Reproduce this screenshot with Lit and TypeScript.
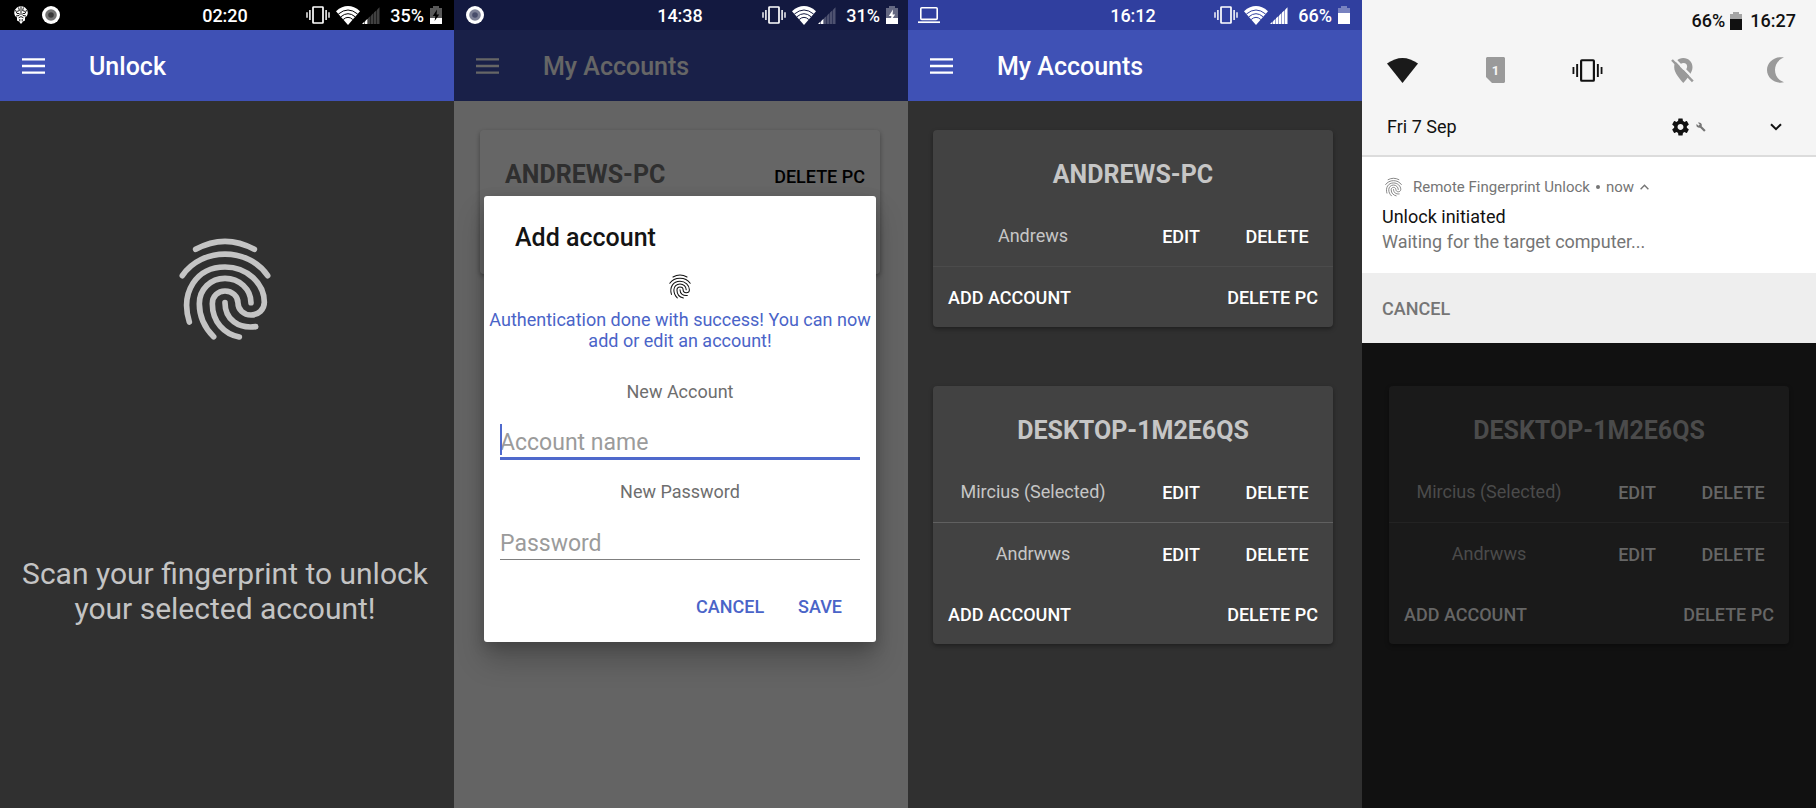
import { LitElement, html, svg, css, nothing } from "lit";
import { customElement, property } from "lit/decorators.js";

const reset = css`
  *,
  *::before,
  *::after {
    box-sizing: border-box;
  }
  h1,
  h2,
  p,
  ul {
    margin: 0;
    padding: 0;
  }
  ul {
    list-style: none;
  }
  svg {
    display: block;
    flex: none;
  }
  button {
    margin: 0;
    padding: 0;
    border: 0;
    background: none;
    color: inherit;
    font: inherit;
    cursor: pointer;
  }
`;

const fingerprint = (width: number, height: number, stroke: number) => html`
  <svg width=${width} height=${height} viewBox="57 53 276 306" fill="none" stroke="currentColor"
    stroke-width=${stroke} stroke-linecap="round" aria-hidden="true">
    <path d="M107 87Q195 39 283 87" />
    <path d="M67 166C125 80 265 80 323 166" />
    <path d="M88 305C60 215 110 140 195 140C262 140 313 190 313 246C313 268 295 284 273 284C251 284 234 268 234 248C234 228 217 212 195 212C174 212 157 228 157 250C157 305 193 341 238 350" />
    <path d="M161 349C132 320 118 290 118 250C118 207 152 174 195 174C238 174 273 207 273 247" />
    <path d="M195 247C195 297 235 326 287 319" />
  </svg>
`;

const vibrate = (width: number, height: number) => html`
  <svg width=${width} height=${height} viewBox="0 0 24 18" fill="none" stroke="currentColor" aria-hidden="true">
    <rect x="7" y="1" width="10" height="16" rx="0.6" stroke-width="1.7" />
    <path d="M3.9 4V14M20.1 4V14" stroke-width="1.5" />
    <path d="M1 6.2V11.8M23 6.2V11.8" stroke-width="1.4" />
  </svg>
`;

const battery = (level: number, charging = false) => html`
  <svg width="12" height="18" viewBox="0 0 12 18" fill="currentColor" aria-hidden="true">
    <path d="M3 0H9V2H12V18H0V2H3Z" opacity="0.35" />
    <rect x="0" y=${18 - level} width="12" height=${level} />
    ${charging
      ? svg`<path class="bolt" d="M7 3.5L2.8 10H5.4L4.6 15L9.2 8.4H6.6Z" />`
      : nothing}
  </svg>
`;

const wifi = html`
  <svg width="24" height="19" viewBox="0 0 24 19" aria-hidden="true">
    <path d="M12 19L0 5.2Q12 -5 24 5.2Z" fill="currentColor" />
    <path class="gap" d="M2.4 8Q12 0 21.6 8M4.8 10.8Q12 4.6 19.2 10.8M7.2 13.5Q12 9.2 16.8 13.5" />
  </svg>
`;

const signal = (bars: number) => html`
  <svg width="18" height="17" viewBox="0 0 18 17" fill="currentColor" aria-hidden="true">
    ${[0, 1, 2, 3, 4, 5].map(
      (i) => svg`<path opacity=${i < bars ? 1 : 0.25}
        d="M${i * 3} 17V${17 - i * 2.85}L${i * 3 + 2.5} ${14.6 - i * 2.85}V17Z" />`
    )}
  </svg>
`;

const lens = html`
  <svg width="26" height="18" viewBox="0 0 26 18" aria-hidden="true">
    <circle cx="13" cy="9" r="9" fill="currentColor" />
    <circle class="ring" cx="13" cy="9" r="5.8" />
    <circle class="core" cx="13" cy="9" r="2.8" />
  </svg>
`;

const brain = html`
  <svg width="26" height="18" viewBox="0 0 26 18" aria-hidden="true">
    <path fill="currentColor" d="M9 1.4Q13 -.8 17 1.4Q20.4 4 19.6 8Q19.4 10.6 17 11.6V14.4L15 15.6L13 18L11 15.6L9 14.4V11.6Q6.6 10.6 6.4 8Q5.6 4 9 1.4Z" />
    <path fill="none" stroke="#000" stroke-width="0.9" d="M13 .5V7M10.6 1.5L11.4 4.6L9 5.4M15.4 1.5L14.6 4.6L17 5.4M7.5 4L9 7.5H11.4M18.5 4L17 7.5H14.6M8 10L11 9.5L13 7.5L15 9.5L18 10M10.6 11.8L13 10.6L15.4 11.8M11.8 13V15.4M14.2 13V15.4" />
  </svg>
`;

const laptop = html`
  <svg width="26" height="18" viewBox="0 0 26 18" fill="none" stroke="currentColor" aria-hidden="true">
    <rect x="4.8" y="1.8" width="16.4" height="11.6" rx="1" stroke-width="1.6" />
    <path d="M2 16.2H24" stroke-width="1.7" />
  </svg>
`;

@customElement("status-bar")
export class StatusBar extends LitElement {
  @property() time = "";
  @property() charge = "";
  @property({ type: Number }) level = 6;
  @property({ type: Number }) bars = 2;
  @property({ type: Boolean }) charging = false;
  @property() notices = "";

  static styles = [
    reset,
    css`
      :host {
        display: grid;
        grid-template-columns: 1fr auto 1fr;
        align-items: center;
        height: 30px;
        padding: 0 calc(8px + var(--trim)) 0 8px;
        background: var(--status);
        color: #fff;
        font-size: 18px;
        line-height: 20px;
        font-weight: 500;
      }
      span {
        padding-top: 2px;
      }
      .notices,
      .system {
        display: flex;
        align-items: center;
        gap: 4px;
      }
      .system {
        justify-content: flex-end;
        gap: 6px;
      }
      .radio {
        display: flex;
        align-items: center;
        gap: 2px;
        padding-right: 4px;
      }
      .gap {
        fill: none;
        stroke: var(--status);
        stroke-width: 1;
      }
      .ring {
        fill: var(--status);
        opacity: 0.55;
      }
      .core {
        fill: var(--status);
        opacity: 0.5;
      }
      .bolt {
        fill: var(--bolt);
      }
    `,
  ];

  render() {
    return html`
      <div class="notices">
        ${this.notices.split(" ").map((n) => (n === "brain" ? brain : n === "lens" ? lens : laptop))}
      </div>
      <span>${this.time}</span>
      <div class="system">
        ${vibrate(24, 18)}
        <div class="radio">${wifi} ${signal(this.bars)}</div>
        <span>${this.charge}</span>
        ${battery(this.level, this.charging)}
      </div>
    `;
  }
}

@customElement("app-bar")
export class AppBar extends LitElement {
  @property() heading = "";

  static styles = [
    reset,
    css`
      :host {
        display: flex;
        align-items: center;
        gap: 44px;
        height: 71px;
        padding: 0 22px;
        background: #3f51b5;
        color: #fff;
      }
      h1 {
        padding-top: 3px;
        font-size: 25px;
        line-height: 30px;
        font-weight: 500;
      }
    `,
  ];

  render() {
    return html`
      <button aria-label="Open menu">
        <svg width="23" height="16" viewBox="0 0 23 16" aria-hidden="true">
          <path d="M0 1.3H23M0 8H23M0 14.7H23" stroke="currentColor" stroke-width="2.3" />
        </svg>
      </button>
      <h1>${this.heading}</h1>
    `;
  }
}

@customElement("pc-card")
export class PcCard extends LitElement {
  @property() name = "";
  @property({ type: Array }) accounts: string[] = [];

  static styles = [
    reset,
    css`
      :host {
        display: block;
        border-radius: 4px;
        background: var(--card, #424242);
        box-shadow: 0 2px 4px rgba(0, 0, 0, 0.35);
        color: var(--card-action, #fff);
        font-size: 18px;
        line-height: 22px;
      }
      h2 {
        padding: 30px 16px 16px;
        color: var(--card-text, #c6c6c6);
        font-size: 25px;
        line-height: 29px;
        font-weight: 700;
        text-align: center;
      }
      .account {
        display: grid;
        grid-template-columns: 25fr 12fr 12fr;
        align-items: center;
        height: 61px;
        padding-right: 8px;
        text-align: center;
      }
      .account:first-child {
        height: 62px;
        border-bottom: 1px solid var(--card-line, #606060);
      }
      .faint .account:first-child {
        border-color: var(--card-faint, #4b4b4b);
      }
      .name {
        color: var(--card-text, #c6c6c6);
      }
      .account button,
      .actions button {
        padding-top: 2px;
        font-weight: 500;
      }
      .actions {
        display: flex;
        justify-content: space-between;
        align-items: center;
        height: 60px;
        padding: 0 15px;
      }
    `,
  ];

  render() {
    return html`
      <h2>${this.name}</h2>
      <ul class=${this.accounts.length > 1 ? "list" : "faint"}>
        ${this.accounts.map(
          (a) => html`
            <li class="account">
              <span class="name">${a}</span>
              <button>EDIT</button>
              <button>DELETE</button>
            </li>
          `
        )}
      </ul>
      <div class="actions">
        <button>ADD ACCOUNT</button>
        <button>DELETE PC</button>
      </div>
    `;
  }
}

@customElement("account-dialog")
export class AccountDialog extends LitElement {
  static styles = [
    reset,
    css`
      :host {
        display: block;
        padding: 27px 16px 17px;
        border-radius: 3px;
        background: #fff;
        box-shadow: 0 18px 28px rgba(0, 0, 0, 0.22), 0 4px 14px rgba(0, 0, 0, 0.18);
        color: #6e6e6e;
        font-size: 18px;
        line-height: 21px;
        text-align: center;
      }
      h2 {
        margin: 0 15px 21px;
        color: #141414;
        font-size: 25px;
        line-height: 30px;
        font-weight: 500;
        text-align: left;
      }
      .print {
        display: flex;
        justify-content: center;
        margin-bottom: 10px;
        color: #111;
      }
      .message {
        margin: 0 -14px 30px;
        color: #4a64c8;
      }
      label {
        display: block;
        margin-bottom: 22px;
      }
      .field {
        position: relative;
        margin-bottom: 21px;
      }
      input {
        display: block;
        width: 100%;
        height: 36px;
        margin: 0;
        padding: 3px 0 0;
        border: 0;
        border-bottom: 1px solid #7f7f7f;
        border-radius: 0;
        outline: 0;
        background: none;
        color: #222;
        font: inherit;
        font-size: 23px;
      }
      input::placeholder {
        color: #9b9b9b;
        opacity: 1;
      }
      .active input {
        border-bottom: 3px solid #4f69cc;
      }
      .caret {
        position: absolute;
        top: 0;
        left: 0;
        width: 2px;
        height: 31px;
        background: #4f69cc;
      }
      .actions {
        display: flex;
        justify-content: flex-end;
        gap: 34px;
        margin-top: 28px;
        padding-right: 18px;
        color: #4a64c8;
      }
      .actions button {
        height: 37px;
        font-weight: 500;
      }
    `,
  ];

  render() {
    return html`
      <h2>Add account</h2>
      <div class="print">${fingerprint(22, 25, 13)}</div>
      <p class="message">Authentication done with success! You can now add or edit an account!</p>
      <label for="account">New Account</label>
      <div class="field active">
        <input id="account" type="text" placeholder="Account name" />
        <span class="caret"></span>
      </div>
      <label for="password">New Password</label>
      <div class="field">
        <input id="password" type="password" placeholder="Password" />
      </div>
      <div class="actions">
        <button>CANCEL</button>
        <button>SAVE</button>
      </div>
    `;
  }
}

@customElement("notification-shade")
export class NotificationShade extends LitElement {
  static styles = [
    reset,
    css`
      :host {
        display: block;
        background: #fff;
        color: #111;
        font-size: 18px;
        line-height: 22px;
      }
      .quick {
        padding: 10px 26px 17px 25px;
        border-bottom: 2px solid #dcdcdc;
        background: #f5f5f5;
      }
      .status {
        display: flex;
        justify-content: flex-end;
        align-items: center;
        gap: 5px;
        margin-right: -6px;
        font-weight: 500;
      }
      .time {
        margin-left: 3px;
      }
      .tiles {
        display: flex;
        justify-content: space-between;
        align-items: center;
        height: 26px;
        margin: 25px 6px 33px 0;
      }
      .off {
        color: #9a9a9a;
      }
      .date {
        display: flex;
        align-items: center;
        height: 22px;
      }
      .date p {
        flex: 1;
      }
      .gear {
        display: flex;
        align-items: center;
        gap: 7px;
        margin-right: 64px;
      }
      .wrench {
        color: #777;
      }
      .expand {
        margin-right: 8px;
      }
      .notice {
        padding: 20px 20px 20px;
      }
      .source {
        display: flex;
        align-items: center;
        gap: 6px;
        height: 20px;
        margin-bottom: 9px;
        padding-left: 3px;
        color: #757575;
        font-size: 15px;
        line-height: 20px;
      }
      .app {
        margin-left: 5px;
      }
      .dot {
        width: 4px;
        height: 4px;
        border-radius: 2px;
        background: #757575;
      }
      .text {
        margin-top: 3px;
        color: #757575;
      }
      .actions {
        display: flex;
        align-items: center;
        height: 70px;
        padding: 0 20px;
        background: #eee;
        color: #757575;
      }
      .actions button {
        padding-top: 2px;
        font-weight: 500;
      }
      .digit {
        fill: #f5f5f5;
        font-size: 13px;
        font-weight: 700;
      }
    `,
  ];

  render() {
    return html`
      <div class="quick">
        <div class="status">
          <span>66%</span>
          ${battery(11)}
          <span class="time">16:27</span>
        </div>
        <div class="tiles">
          <button aria-label="Wi-Fi">
            <svg width="31" height="25" viewBox="0 0 31 25" aria-hidden="true">
              <path d="M15.500 25L0 5.600Q15.500 -5.600 31 5.600Z" fill="#1a1a1a" />
            </svg>
          </button>
          <button class="off" aria-label="SIM card">
            <svg width="19" height="26" viewBox="0 0 19 26" aria-hidden="true">
              <path d="M1 0H18L19 1V25L18 26H6L0 20V1Z" fill="currentColor" />
              <text class="digit" x="9.500" y="17.500" text-anchor="middle">1</text>
            </svg>
          </button>
          <button aria-label="Vibrate">${vibrate(31, 23)}</button>
          <button class="off" aria-label="Location off">
            <svg width="23" height="26" viewBox="0 0 23 26" aria-hidden="true">
              <path d="M12.300 1C17.600 1 21.500 5 21.500 10.200C21.500 16 15.600 22 12.300 26C9 22 3.200 16 3.200 10.200C3.200 5 7 1 12.300 1Z" fill="currentColor" />
              <circle cx="12.500" cy="9.500" r="3.600" fill="#f5f5f5" />
              <path d="M2.600 1L24 23" stroke="#f5f5f5" stroke-width="2.500" />
              <path d="M1 3L21.800 24.400" stroke="currentColor" stroke-width="2.400" />
            </svg>
          </button>
          <button class="off" aria-label="Night mode">
            <svg width="23" height="26" viewBox="-6 0 23 26" aria-hidden="true">
              <path d="M17 .6C10.500 3 8 8 8 13C8 18 10.500 23 17 25.200C8 27.500 0 21 0 13C0 5 8 -1.500 17 .6Z" fill="currentColor" />
            </svg>
          </button>
        </div>
        <div class="date">
          <p>Fri 7 Sep</p>
          <button class="gear" aria-label="Settings">
            <svg width="17" height="18" viewBox="2 2 20 20" aria-hidden="true">
              <path fill="currentColor" d="M19.430 12.980c.04-.32.07-.64.07-.98s-.03-.66-.07-.98l2.110-1.650c.19-.15.24-.42.12-.64l-2-3.460c-.12-.22-.39-.3-.61-.22l-2.490 1c-.52-.4-1.080-.73-1.690-.98l-.38-2.650C14.460 2.180 14.250 2 14 2h-4c-.25 0-.46.18-.49.42l-.38 2.650c-.61.25-1.170.59-1.690.98l-2.490-1c-.23-.09-.49 0-.61.22l-2 3.460c-.13.22-.07.49.12.64l2.110 1.650c-.04.32-.07.65-.07.98s.03.66.07.98l-2.110 1.650c-.19.15-.24.42-.12.64l2 3.460c.12.22.39.3.61.22l2.490-1c.52.4 1.080.73 1.690.98l.38 2.650c.03.24.24.42.49.42h4c.25 0 .46-.18.49-.42l.38-2.650c.61-.25 1.170-.59 1.690-.98l2.490 1c.23.09.49 0 .61-.22l2-3.460c.12-.22.07-.49-.12-.64l-2.110-1.650zM12 15.500c-1.930 0-3.500-1.570-3.500-3.500s1.570-3.500 3.500-3.500 3.500 1.570 3.500 3.500-1.570 3.500-3.500 3.500z" />
            </svg>
            <svg class="wrench" width="10" height="10" viewBox="0 0 24 24" aria-hidden="true">
              <path fill="currentColor" d="M22.700 19l-9.100-9.100c.9-2.300.4-5-1.500-6.900-2-2-5-2.400-7.400-1.300L9 6 6 9 1.600 4.700C.4 7.100.9 10.100 2.900 12.100c1.900 1.900 4.600 2.400 6.900 1.500l9.100 9.100c.4.4 1 .4 1.400 0l2.300-2.300c.5-.4.5-1.100.1-1.400z" />
            </svg>
          </button>
          <button class="expand" aria-label="Expand">
            <svg width="12" height="8" viewBox="0 0 12 8" fill="none" aria-hidden="true">
              <path d="M1 1.200L6 6.200L11 1.200" stroke="currentColor" stroke-width="2" />
            </svg>
          </button>
        </div>
      </div>
      <div class="notice">
        <div class="source">
          ${fingerprint(17, 20, 14)}
          <span class="app">Remote Fingerprint Unlock</span>
          <span class="dot"></span>
          <span>now</span>
          <svg width="9" height="6" viewBox="0 0 9 6" fill="none" aria-hidden="true">
            <path d="M.6 5.200L4.500 1.200L8.400 5.200" stroke="currentColor" stroke-width="1.400" />
          </svg>
        </div>
        <p>Unlock initiated</p>
        <p class="text">Waiting for the target computer...</p>
      </div>
      <div class="actions"><button>CANCEL</button></div>
    `;
  }
}

@customElement("app-root")
export class AppRoot extends LitElement {
  static styles = [
    reset,
    css`
      :host {
        display: grid;
        grid-template-columns: repeat(4, minmax(0, 1fr));
        min-height: 100vh;
        font-family: Roboto, sans-serif;
      }
      .screen {
        --trim: 4px;
        --status: #303f9f;
        --bolt: #000;
        display: flex;
        flex-direction: column;
        background: #303030;
      }
      .unlock {
        --status: #000;
      }
      .scan {
        display: flex;
        flex-direction: column;
        align-items: center;
        gap: 216px;
        padding: 137px calc(16px + var(--trim)) 40px 16px;
        color: #c4c4c4;
        font-size: 30px;
        line-height: 35px;
        text-align: center;
      }
      .adding {
        --trim: 2px;
        --status: #131940;
        --bolt: #fff;
        background: #fafafa;
      }
      .behind {
        position: relative;
        flex: 1;
      }
      .pc {
        display: flex;
        justify-content: space-between;
        align-items: flex-start;
        height: 144px;
        margin: 29px 28px 0 26px;
        padding: 30px 15px 0 25px;
        border-radius: 4px;
        background: #fff;
        box-shadow: 0 2px 5px rgba(0, 0, 0, 0.35);
        color: #000;
        font-size: 18px;
        font-weight: 500;
      }
      .pc h2 {
        color: #757575;
        font-size: 25px;
        line-height: 29px;
        font-weight: 700;
      }
      .pc button {
        padding-top: 6px;
        line-height: 22px;
      }
      .scrim {
        position: absolute;
        inset: 0;
        padding: 166px 32px 0 30px;
        background: rgba(0, 0, 0, 0.6);
      }
      .cards {
        display: flex;
        flex-direction: column;
        gap: 59px;
        padding: 29px calc(25px + var(--trim)) 29px 25px;
      }
      .shaded {
        background: #111;
        --card: #1a1a1a;
        --card-text: #4b4b4b;
        --card-action: #666;
        --card-line: #232323;
      }
      .below {
        padding: 43px 27px 29px;
      }
    `,
  ];

  render() {
    return html`
      <section class="screen unlock">
        <status-bar time="02:20" charge="35%" level="6" bars="2" charging notices="brain lens"></status-bar>
        <app-bar heading="Unlock"></app-bar>
        <div class="scan">
          ${fingerprint(92, 102, 17)}
          <p>Scan your fingerprint to unlock your selected account!</p>
        </div>
      </section>

      <section class="screen adding">
        <status-bar time="14:38" charge="31%" level="6" bars="2" charging notices="lens"></status-bar>
        <div class="behind">
          <app-bar heading="My Accounts"></app-bar>
          <div class="pc">
            <h2>ANDREWS-PC</h2>
            <button>DELETE PC</button>
          </div>
          <div class="scrim"><account-dialog role="dialog" aria-label="Add account"></account-dialog></div>
        </div>
      </section>

      <section class="screen">
        <status-bar time="16:12" charge="66%" level="11" bars="6" notices="laptop"></status-bar>
        <app-bar heading="My Accounts"></app-bar>
        <div class="cards">
          <pc-card name="ANDREWS-PC" .accounts=${["Andrews"]}></pc-card>
          <pc-card name="DESKTOP-1M2E6QS" .accounts=${["Mircius (Selected)", "Andrwws"]}></pc-card>
        </div>
      </section>

      <section class="screen shaded">
        <notification-shade></notification-shade>
        <div class="below">
          <pc-card name="DESKTOP-1M2E6QS" .accounts=${["Mircius (Selected)", "Andrwws"]}></pc-card>
        </div>
      </section>
    `;
  }
}
